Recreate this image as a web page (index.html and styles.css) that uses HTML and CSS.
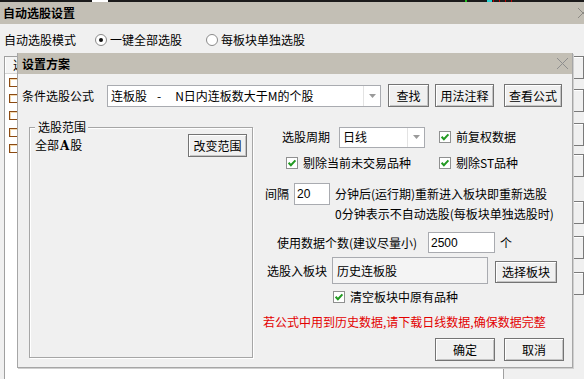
FILE: index.html
```html
<!DOCTYPE html>
<html lang="zh-CN">
<head>
<meta charset="utf-8">
<title>自动选股设置</title>
<link rel="stylesheet" href="styles.css">
</head>
<body>
<div class="win">
  <div class="strip"><span class="sw"></span><span class="sg"></span><span class="sc"></span><span class="sr"></span></div>
  <div class="titlebar">
    <span>自动选股设置</span>
    <svg class="xouter" width="12" height="12" viewBox="0 0 12 12"><path d="M1 1L11 11M11 1L1 11" stroke="#8c8a84" stroke-width="1" fill="none"/></svg>
  </div>
  <div class="moderow">
    <span class="mlabel">自动选股模式</span>
    <span class="radio on"></span><span class="rtext">一键全部选股</span>
    <span class="radio"></span><span class="rtext">每板块单独选股</span>
  </div>
  <div class="main">
    <div class="list">
      <div class="lhead"><span class="hcell">选股方案</span></div>
      <div class="lrow"><i class="ico"></i></div>
      <div class="lrow"><i class="ico"></i></div>
      <div class="lrow"><i class="ico"></i></div>
      <div class="lrow"><i class="ico"></i></div>
      <div class="lrow"><i class="ico"></i></div>
    </div>
    <div class="side">
      <button class="sbtn s1">新建方案</button>
      <button class="sbtn s2">修改方案</button>
      <button class="sbtn s3">删除方案</button>
      <button class="sbtn s4">方案上移</button>
      <button class="sbtn s5">导出方案</button>
      <button class="sbtn s6">全部选股</button>
      <button class="sbtn s7">加入板块</button>
    </div>
  </div>

  <div class="dialog">
    <div class="dtitle">
      <span>设置方案</span>
      <svg width="13" height="13" viewBox="0 0 13 13"><path d="M1 1L12 12M12 1L1 12" stroke="#8e8e8e" stroke-width="1" fill="none"/></svg>
    </div>
    <div class="dbody">
      <div class="frow">
        <span class="flabel">条件选股公式</span>
        <div class="combo fcombo">
          <span class="ctext">连板股<span class="dash">-</span>N日内连板数大于M的个股</span>
          <span class="carrow"><svg width="7" height="4" viewBox="0 0 7 4"><path d="M0 0H7L3.5 4Z" fill="#9a9a9a"/></svg></span>
        </div>
        <button class="btn b-find">查找</button>
        <button class="btn b-usage">用法注释</button>
        <button class="btn b-view">查看公式</button>
      </div>
      <div class="cols">
        <div class="group">
          <span class="legend">选股范围</span>
          <div class="grow">
            <span>全部<b class="abig">A</b>股</span>
            <button class="btn b-range">改变范围</button>
          </div>
        </div>
        <div class="rcol">
          <div class="row ra">
            <span class="lbl4">选股周期</span>
            <div class="combo pcombo">
              <span class="ctext">日线</span>
              <span class="carrow"><svg width="7" height="4" viewBox="0 0 7 4"><path d="M0 0H7L3.5 4Z" fill="#9a9a9a"/></svg></span>
            </div>
            <label class="chk ca"><svg class="cb" width="12" height="12" viewBox="0 0 12 12"><rect x=".5" y=".5" width="11" height="11" fill="#fff" stroke="#8f9090"/><path d="M2.6 5.8L4.9 8.3L9.4 3.4" stroke="#229a22" stroke-width="2" fill="none"/></svg>前复权数据</label>
          </div>
          <div class="row rb">
            <label class="chk c1"><svg class="cb" width="12" height="12" viewBox="0 0 12 12"><rect x=".5" y=".5" width="11" height="11" fill="#fff" stroke="#8f9090"/><path d="M2.6 5.8L4.9 8.3L9.4 3.4" stroke="#229a22" stroke-width="2" fill="none"/></svg>剔除当前未交易品种</label>
            <label class="chk"><svg class="cb" width="12" height="12" viewBox="0 0 12 12"><rect x=".5" y=".5" width="11" height="11" fill="#fff" stroke="#8f9090"/><path d="M2.6 5.8L4.9 8.3L9.4 3.4" stroke="#229a22" stroke-width="2" fill="none"/></svg>剔除ST品种</label>
          </div>
          <div class="row rc">
            <span class="lbl2">间隔</span>
            <span class="inp i-int">20</span>
            <span>分钟后(运行期)重新进入板块即重新选股</span>
          </div>
          <div class="row rd">
            <span>0分钟表示不自动选股(每板块单独选股时)</span>
          </div>
          <div class="row re">
            <span class="lblnum">使用数据个数(建议尽量小)</span>
            <span class="inp i-num">2500</span>
            <span class="unit">个</span>
          </div>
          <div class="row rf">
            <span class="lbl5">选股入板块</span>
            <span class="inp i-blk">历史连板股</span>
            <button class="btn b-blk">选择板块</button>
          </div>
          <div class="row rg">
            <label class="chk"><svg class="cb" width="12" height="12" viewBox="0 0 12 12"><rect x=".5" y=".5" width="11" height="11" fill="#fff" stroke="#8f9090"/><path d="M2.6 5.8L4.9 8.3L9.4 3.4" stroke="#229a22" stroke-width="2" fill="none"/></svg>清空板块中原有品种</label>
          </div>
          <div class="row rh">
            <span class="warn">若公式中用到历史数据,请下载日线数据,确保数据完整</span>
          </div>
          <div class="row ri">
            <button class="btn b-ok">确定</button>
            <button class="btn b-cancel">取消</button>
          </div>
        </div>
      </div>
    </div>
  </div>
</div>
</body>
</html>
```
FILE: styles.css
```css
* { box-sizing: border-box; }
html, body { margin: 0; padding: 0; }
body {
  width: 584px;
  height: 379px;
  overflow: hidden;
  background: #f0f0f0;
  font: 12px/14px "Noto Sans CJK SC", "Noto Sans", sans-serif;
  color: #000;
}
.win { position: relative; width: 584px; height: 379px; overflow: hidden; }

/* top strip */
.strip { height: 2px; background: #1b1b1b; display: flex; }
.sw { margin-left: 92px; width: 16px; background: #fff; }
.sg { margin-left: 357px; width: 2px; background: #22c022; }
.sc { margin-left: 20px; width: 5px; background: #2ad4d4; }
.sr { margin-left: 1px; width: 20px; background: repeating-linear-gradient(90deg, #c00000 0 1px, transparent 1px 6px); }

/* main window title */
.titlebar {
  height: 22px;
  background: #c3bfb5;
  display: flex;
  align-items: center;
  justify-content: space-between;
  padding-left: 3px;
  font-weight: bold;
}
.xouter { margin-right: -5px; }

/* mode row */
.moderow { height: 31px; display: flex; align-items: center; padding-left: 4px; }
.mlabel { width: 91px; }
.radio {
  width: 12px; height: 12px;
  border-radius: 50%;
  border: 1px solid #8a8a8a;
  background: #fff;
  display: flex; align-items: center; justify-content: center;
  margin-right: 3px;
}
.radio.on::after { content: ""; width: 4px; height: 4px; border-radius: 50%; background: #111; }
.rtext { margin-right: 24px; }

/* background list & side buttons */
.main { display: flex; padding-left: 4px; padding-top: 1px; height: 330px; }
.list {
  width: 514px;
  height: 340px;
  background: #fff;
  border-left: 1px solid #a0a0a0;
  border-right: 1px solid #a0a0a0;
  border-top: 1px solid #a0a0a0;
}
.lhead { height: 17px; display: flex; border-bottom: 1px solid #d5d5d5; }
.hcell { padding-left: 7px; width: 120px; border-left: 1px solid #fff; border-right: 1px solid #c8c8c8; background: #f4f4f4; line-height: 16px; }
.lrow { height: 16.6px; display: flex; align-items: center; padding-left: 4px; }
.lrow:first-of-type { margin-top: 3px; }
.ico {
  display: block;
  width: 12px; height: 9px;
  border: 1px solid #8b4a12;
  border-right: none;
  box-shadow: inset 1px 1px 0 #f3d9b0;
}
.side { flex: 1; padding-left: 6px; display: flex; flex-direction: column; }
.sbtn {
  width: 74px; height: 23px;
  flex: none;
  font: inherit;
  padding: 0;
  border: 1px solid #7a7a7a;
  background: #f0f0f0;
  box-shadow: inset 1px 1px 0 #fff;
  color: #000;
}
.s1 { margin-top: 0; }
.s2 { margin-top: 10px; }
.s3 { margin-top: 11px; }
.s4 { margin-top: 8px; }
.s5 { margin-top: 24px; }
.s6 { margin-top: 12px; }
.s7 { margin-top: 13px; }

/* dialog (window over content) */
.dialog {
  position: absolute;
  left: 17px;
  top: 53px;
  width: 556px;
  height: 315px;
  background: #f0f0f0;
  border: 1px solid #a6a6a6;
  border-top: none;
  box-shadow: 1px 1px 0 #cfcfcf;
}
.dtitle {
  height: 21px;
  background: #c3bfb5;
  display: flex;
  align-items: center;
  justify-content: space-between;
  padding: 0 3px 0 4px;
  font-weight: bold;
}
.dbody { padding-top: 10px; }

.frow { display: flex; align-items: center; height: 23px; padding-left: 4px; }
.flabel { width: 85px; }
.combo {
  height: 22px;
  border: 1px solid #a9abb0;
  background: #fff;
  display: flex;
  align-items: center;
}
.ctext { flex: 1; padding-left: 3px; white-space: nowrap; }
.dash { margin: 0 14px 0 10px; }
.carrow {
  width: 17px; height: 100%;
  border-left: 1px solid #e3e3e3;
  display: flex; align-items: center; justify-content: center;
}
.fcombo { width: 274px; margin-top: 1px; }

.btn {
  height: 23px;
  font: inherit;
  padding: 0;
  color: #000;
  border: 1px solid #747474;
  background: #f0f0f0;
  box-shadow: inset 1px 1px 0 #fff, inset -1px -1px 0 #c4c4c4;
  display: flex; align-items: center; justify-content: center;
  flex: none;
}
.b-find { width: 41px; margin-left: 7px; }
.b-usage { width: 59px; margin-left: 6px; }
.b-view { width: 58px; margin-left: 10px; }

.cols { display: flex; margin-top: 19px; }
.group {
  position: relative;
  margin-left: 11px;
  margin-top: 1px;
  width: 224px;
  height: 231px;
  border: 1px solid #a6a6a6;
  box-shadow: inset 1px 1px 0 #fff, 1px 1px 0 #fff;
}
.legend {
  position: absolute;
  left: 5px;
  top: -8px;
  padding: 0 2px 0 3px;
  background: #f0f0f0;
}
.grow { display: flex; align-items: center; justify-content: space-between; padding: 6px 5px 0 5px; }
.abig { font-family: "DejaVu Serif", serif; font-size: 12px; margin: 0 1px; }
.b-range { width: 59px; }

.rcol { margin-left: 10px; display: flex; flex-direction: column; width: 300px; }
.row { display: flex; align-items: center; white-space: nowrap; }
.chk { display: flex; align-items: center; }
.cb { margin-right: 5px; flex: none; }

.ra { height: 22px; padding-left: 19px; }
.lbl4 { width: 57px; }
.pcombo { width: 86px; height: 21px; }
.ca { margin-left: 14px; }

.rb { height: 14px; margin-top: 8px; padding-left: 23px; }
.c1 { width: 153px; }

.rc { height: 22px; margin-top: 13px; padding-left: 2px; }
.lbl2 { width: 29px; }
.inp {
  height: 22px;
  border: 1px solid #a9abb0;
  background: #fff;
  display: flex; align-items: center;
  padding-left: 2px;
  font-family: "Liberation Sans", sans-serif;
  font-size: 12px;
  flex: none;
}
.i-int { width: 36px; margin-right: 5px; }

.rd { height: 14px; margin-top: 2px; padding-left: 72px; }

.re { height: 21px; margin-top: 11px; padding-left: 14px; }
.lblnum { width: 151px; }
.i-num { width: 67px; height: 21px; }
.unit { margin-left: 5px; }

.rf { height: 27px; margin-top: 4px; padding-left: 4px; }
.lbl5 { width: 65px; }
.i-blk { width: 156px; height: 27px; background: #f4f4f4; font-family: "Noto Sans CJK SC", sans-serif; padding-left: 4px; }
.b-blk { width: 62px; height: 22px; margin-left: 7px; margin-top: 2px; }

.rg { height: 14px; margin-top: 6px; padding-left: 70px; }
.rh { height: 14px; margin-top: 11px; }
.warn { color: #e30000; }

.ri { height: 23px; margin-top: 9px; padding-left: 172px; }
.b-ok { width: 60px; }
.b-cancel { width: 60px; margin-left: 9px; }
```
